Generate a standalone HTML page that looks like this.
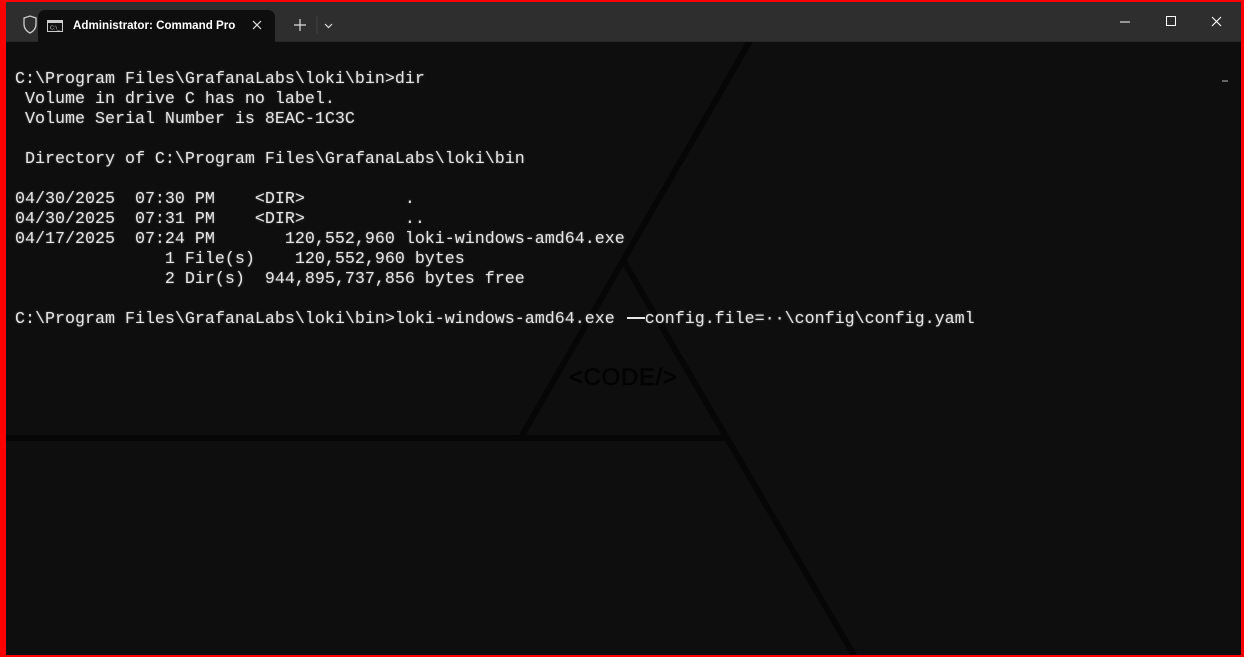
<!DOCTYPE html>
<html><head><style>
html,body{margin:0;padding:0;width:1244px;height:657px;overflow:hidden;background:#ff0000;}
#win{position:absolute;left:6px;top:2px;width:1235px;height:653px;background:#0e0e0e;overflow:hidden;}
#title{position:absolute;left:0;top:0;width:1235px;height:39px;background:#2e2e2e;border-bottom:1px solid #262626;}
#tab{position:absolute;left:32px;top:8px;width:237px;height:32px;background:#0e0e0e;border-radius:7px 7px 0 0;}
.t{position:absolute;font-family:"Liberation Sans",sans-serif;color:#fff;font-size:12px;}
pre{position:absolute;left:9px;top:68px;margin:0;font-family:"Liberation Mono",monospace;font-size:16.67px;line-height:20px;color:#e6e6e6;text-shadow:0 0 2px rgba(255,255,255,0.35);}
svg{position:absolute;left:0;top:0;}
.dash{display:inline-block;width:20px;position:relative;}
.dash:after{content:"";position:absolute;left:2px;right:0;top:-6px;height:1.5px;background:#e6e6e6;}
</style></head><body>
<div id="win">
<svg width="1235" height="653">
<g stroke="#060606" stroke-width="6" fill="none">
<line x1="744" y1="39" x2="514" y2="437"/>
<line x1="618" y1="260" x2="849" y2="655"/>
<line x1="0" y1="436" x2="721" y2="436"/>
</g>
<text x="563" y="383" font-family="Liberation Sans,sans-serif" font-size="24" fill="#030303" stroke="#030303" stroke-width="0.6" textLength="108">&lt;CODE/&gt;</text>
<line x1="1216" y1="79" x2="1222" y2="79" stroke="#bbb" stroke-width="1"/>
</svg>
<pre>C:\Program Files\GrafanaLabs\loki\bin>dir
 Volume in drive C has no label.
 Volume Serial Number is 8EAC-1C3C

 Directory of C:\Program Files\GrafanaLabs\loki\bin

04/30/2025  07:30 PM    &lt;DIR&gt;          .
04/30/2025  07:31 PM    &lt;DIR&gt;          ..
04/17/2025  07:24 PM       120,552,960 loki-windows-amd64.exe
               1 File(s)    120,552,960 bytes
               2 Dir(s)  944,895,737,856 bytes free

C:\Program Files\GrafanaLabs\loki\bin>loki-windows-amd64.exe <span class="dash"></span>config.file=··\config\config.yaml</pre>
<div id="title">
<svg width="1235" height="40">
<path d="M18 16 L24 14 L30 16 L30 22 Q30 28 24 31 Q18 28 18 22 Z" stroke="#ccc" stroke-width="1.3" fill="none"/>
<path d="M288 23 H300 M294 17 V29" stroke="#ddd" stroke-width="1.2"/>
<line x1="311" y1="14" x2="311" y2="32" stroke="#444"/>
<path d="M319 22 L322.5 25.5 L326 22" stroke="#ddd" stroke-width="1.2" fill="none"/>
<line x1="1114" y1="20" x2="1124" y2="20" stroke="#fff" stroke-width="1"/>
<rect x="1160.5" y="14.5" width="9" height="9" stroke="#fff" fill="none"/>
<path d="M1206 15 L1215 24 M1215 15 L1206 24" stroke="#fff" stroke-width="1.1"/>
</svg>
<div id="tab">
<svg width="237" height="32">
<rect x="9.5" y="10.5" width="15" height="11" fill="#111" stroke="#ccc"/>
<rect x="10" y="11" width="14" height="2" fill="#ccc"/>
<text x="12" y="19.5" font-family="Liberation Sans" font-size="5.5" fill="#ccc">C:\_</text>
<path d="M215 11 L223 19 M223 11 L215 19" stroke="#ddd" stroke-width="1.2"/>
</svg>
<div class="t" style="left:35px;top:9px;font-weight:bold;font-size:11.6px;">Administrator: Command Pro</div>
</div>
</div>
</div>
</body></html>
